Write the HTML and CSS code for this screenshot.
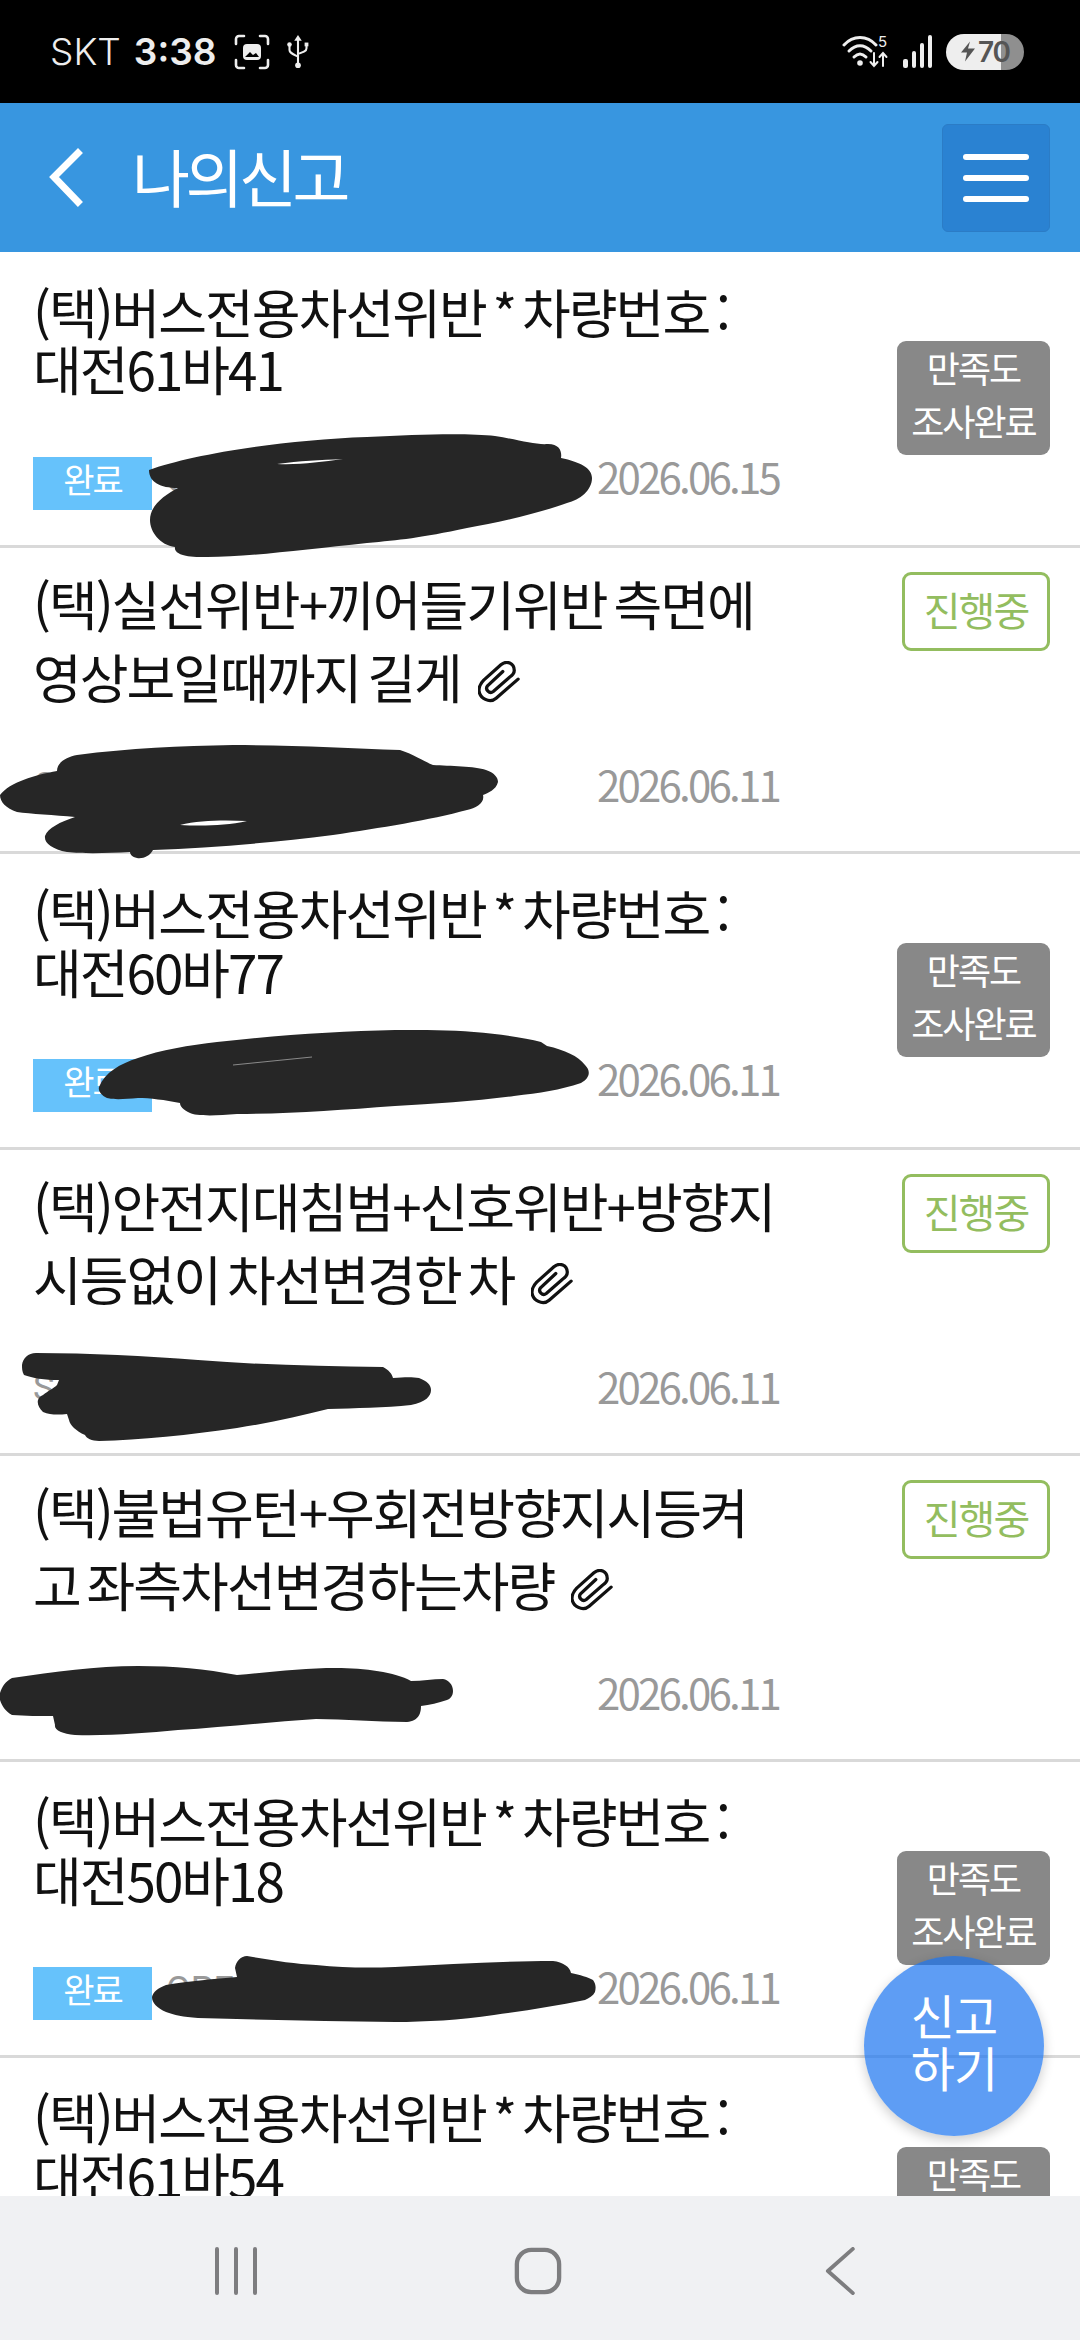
FILE: index.html
```html
<!DOCTYPE html>
<html lang="ko">
<head>
    <meta charset="UTF-8">
    <title>나의신고</title>
    <link rel="stylesheet" href="styles.css">
</head>
<body>
    <!-- Status bar -->
    <div class="status-bar">
        <span class="carrier">SKT</span>
        <span class="clock">3:38</span>
        <svg class="capture-icon" viewBox="0 0 36 36" fill="none" stroke="#eee" stroke-width="2.6" stroke-linecap="round">
            <path d="M2 10V5a3 3 0 0 1 3-3h5M26 2h5a3 3 0 0 1 3 3v5M34 26v5a3 3 0 0 1-3 3h-5M10 34H5a3 3 0 0 1-3-3v-5"/>
            <rect x="9" y="10" width="18" height="16" rx="4" fill="#eee" stroke="none"/>
            <path d="M11 23l5-5 3 3 3-2 3 4z" fill="#000" stroke="none"/>
        </svg>
        <svg class="usb-icon" viewBox="0 0 24 36" fill="none" stroke="#eee" stroke-width="2.2">
            <path d="M12 3v28M3 11v5c0 3 3 4 9 7M21 11v3c0 3-3 4-9 6"/>
            <path d="M12 0l4 6H8z" fill="#eee" stroke="none"/>
            <circle cx="12" cy="32" r="3" fill="#eee" stroke="none"/>
            <circle cx="3" cy="10" r="2.4" fill="#eee" stroke="none"/>
            <rect x="19" y="8" width="4" height="4" fill="#eee" stroke="none"/>
        </svg>
        <span class="status-spacer"></span>
        <svg class="wifi-icon" viewBox="0 0 48 36" fill="none" stroke="#eee" stroke-linecap="round">
            <path d="M2 11C11 1 25 1 34 11" stroke-width="3"/>
            <path d="M7 17c7-7 15-7 22 0" stroke-width="3"/>
            <path d="M12 23c4-4 8-4 12 0" stroke-width="3"/>
            <circle cx="18" cy="29" r="2.8" fill="#eee" stroke="none"/>
            <path d="M32 19v13m-3.500-4l3.500 4 3.500-4M41 32V19m-3.500 4l3.500-4 3.500 4" stroke-width="2"/>
            <text x="36" y="13" class="wifi-five">5</text>
        </svg>
        <svg class="signal-icon" viewBox="0 0 32 36" fill="#eee">
            <rect x="1" y="25" width="5" height="9" rx="2"/>
            <rect x="10" y="17" width="4" height="17" rx="2"/>
            <rect x="18" y="9" width="4" height="25" rx="2"/>
            <rect x="26" y="1" width="4" height="33" rx="2"/>
        </svg>
        <div class="battery">
            <svg class="bolt" viewBox="0 0 16 20"><path d="M10 0L1 11h6l-2 9 10-13H8z" fill="#555"/></svg>
            <span>70</span>
        </div>
    </div>

    <!-- Header -->
    <header>
        <svg class="back-icon" viewBox="0 0 36 60" fill="none" stroke="#fff" stroke-width="7" stroke-linecap="square">
            <path d="M30 5L6 29l24 25"/>
        </svg>
        <h1>나의신고</h1>
        <button class="menu-button">
            <span></span><span></span><span></span>
        </button>
    </header>

    <!-- Report list -->
    <main class="report-list">
        <article class="report-item">
            <div class="report-body">
                <h2>(택)버스전용차선위반 * 차량번호 :<br>대전61바41</h2>
                <div class="report-meta">
                    <span class="tag-done">완료</span>
                    <span class="owner">G</span>
                    <span class="report-date">2026.06.15</span>
                </div>
            </div>
            <div class="state-box state-done">만족도<br>조사완료</div>
            <svg class="scribble" viewBox="0 252 1080 296">
                <path d="M149 470C190 455 280 440 367 437C420 434 470 433 495 436C520 440 535 445 548 444C560 444 562 452 561 458C580 462 592 468 592 478C592 490 580 500 567 503C540 513 500 522 467 528C420 538 400 540 367 543C300 550 240 558 200 557C180 557 174 552 175 547C160 545 150 532 150 520C150 505 165 495 178 488C160 488 149 482 149 470Z"/>
                <path class="slit" d="M277 464C300 461 320 460 343 459C320 462 300 465 277 464Z"/>
            </svg>
        </article>

        <article class="report-item has-file">
            <div class="report-body">
                <h2>(택)실선위반+끼어들기위반 측면에<br>영상보일때까지 길게
                    <svg class="clip-icon" viewBox="0 0 44 44" fill="none" stroke="#111" stroke-width="3.400" stroke-linecap="round"><path d="M42 19L19 39C12 45 2 39 1 31C1 27 3 23 6 20L24 4C30-1 38 2 38 10C38 13 36 15 33 17L16 32C12 35 7 30 10 26L26 11"/></svg>
                </h2>
                <div class="report-meta">
                    <span class="owner">G</span>
                    <span class="report-date">2026.06.11</span>
                </div>
            </div>
            <div class="state-box state-going">진행중</div>
            <svg class="scribble" viewBox="0 548 1080 306">
                <path d="M0 795C10 782 35 775 57 771C57 762 67 757 77 755C130 748 180 746 233 745C290 745 350 748 400 750C415 755 425 762 433 765C450 766 475 766 486 770C495 773 498 778 498 782C496 790 488 793 483 795C485 803 476 808 467 810C430 820 380 828 333 835C270 843 210 848 153 850C150 856 143 859 137 858C132 857 130 854 130 852C110 853 85 854 67 852C52 849 44 843 45 836C48 828 60 822 75 817C55 815 30 814 17 812C6 808 0 802 0 795Z"/>
                <path class="slit" d="M180 825C200 820 225 820 247 821C225 826 200 826 180 825Z"/>
            </svg>
        </article>

        <article class="report-item">
            <div class="report-body">
                <h2>(택)버스전용차선위반 * 차량번호 :<br>대전60바77</h2>
                <div class="report-meta">
                    <span class="tag-done">완료</span>
                    <span class="report-date">2026.06.11</span>
                </div>
            </div>
            <div class="state-box state-done">만족도<br>조사완료</div>
            <svg class="scribble" viewBox="0 854 1080 296">
                <path d="M99 1087C105 1072 120 1064 138 1058C160 1050 190 1045 217 1042C280 1035 340 1031 395 1030C425 1030 450 1030 474 1032C500 1034 525 1038 541 1042L547 1046C565 1050 578 1056 585 1065C591 1071 590 1078 581 1083C560 1090 540 1093 514 1096C475 1101 435 1104 395 1106C340 1110 290 1114 237 1114C215 1116 195 1116 190 1113C183 1110 180 1106 180 1103C165 1100 150 1098 138 1098C125 1099 115 1100 107 1098C101 1095 98 1091 99 1087Z"/>
                <path class="slit-gray" d="M233 1065L312 1057"/>
            </svg>
        </article>

        <article class="report-item has-file">
            <div class="report-body">
                <h2>(택)안전지대침범+신호위반+방향지<br>시등없이 차선변경한 차
                    <svg class="clip-icon" viewBox="0 0 44 44" fill="none" stroke="#111" stroke-width="3.400" stroke-linecap="round"><path d="M42 19L19 39C12 45 2 39 1 31C1 27 3 23 6 20L24 4C30-1 38 2 38 10C38 13 36 15 33 17L16 32C12 35 7 30 10 26L26 11"/></svg>
                </h2>
                <div class="report-meta">
                    <span class="owner">S</span>
                    <span class="report-date">2026.06.11</span>
                </div>
            </div>
            <div class="state-box state-going">진행중</div>
            <svg class="scribble" viewBox="0 1150 1080 306">
                <path d="M22 1365C23 1358 28 1353 36 1353C90 1353 145 1356 198 1360C260 1365 320 1366 383 1367C389 1370 392 1374 393 1378C405 1377 413 1377 419 1378C427 1381 431 1385 431 1390C431 1396 426 1402 411 1405C385 1408 355 1408 328 1409C300 1416 270 1423 237 1428C190 1435 140 1440 99 1441C92 1441 86 1438 85 1435C76 1431 70 1425 69 1420L67 1414C58 1415 50 1415 43 1412C39 1408 37 1404 38 1400C39 1397 41 1396 43 1395C48 1391 54 1388 57 1385L59 1380C45 1380 32 1378 24 1375C22 1372 22 1368 22 1365Z"/>
            </svg>
        </article>

        <article class="report-item has-file">
            <div class="report-body">
                <h2>(택)불법유턴+우회전방향지시등켜<br>고 좌측차선변경하는차량
                    <svg class="clip-icon" viewBox="0 0 44 44" fill="none" stroke="#111" stroke-width="3.400" stroke-linecap="round"><path d="M42 19L19 39C12 45 2 39 1 31C1 27 3 23 6 20L24 4C30-1 38 2 38 10C38 13 36 15 33 17L16 32C12 35 7 30 10 26L26 11"/></svg>
                </h2>
                <div class="report-meta">
                    <span class="report-date">2026.06.11</span>
                </div>
            </div>
            <div class="state-box state-going">진행중</div>
            <svg class="scribble" viewBox="0 1456 1080 306">
                <path d="M0 1693C2 1686 6 1681 12 1678C55 1672 95 1666 138 1666C175 1666 205 1669 237 1675C270 1672 305 1668 336 1668C365 1668 395 1672 411 1681C422 1681 433 1679 443 1679C449 1680 453 1685 453 1691C453 1696 450 1699 447 1700C438 1703 430 1705 421 1706C421 1713 419 1721 407 1722C375 1722 345 1719 316 1719C270 1722 225 1727 178 1730C145 1733 110 1736 75 1735C62 1734 54 1730 55 1725L53 1716C40 1716 25 1716 12 1715C5 1711 2 1706 0 1700Z"/>
            </svg>
        </article>

        <article class="report-item">
            <div class="report-body">
                <h2>(택)버스전용차선위반 * 차량번호 :<br>대전50바18</h2>
                <div class="report-meta">
                    <span class="tag-done">완료</span>
                    <span class="owner">OPE</span>
                    <span class="report-date">2026.06.11</span>
                </div>
            </div>
            <div class="state-box state-done">만족도<br>조사완료</div>
            <svg class="scribble" viewBox="0 1762 1080 296">
                <path d="M152 1997C153 1992 158 1988 166 1985C190 1981 215 1979 237 1977L235 1968C236 1961 241 1956 247 1956C270 1960 295 1964 316 1965C345 1968 370 1968 395 1967C450 1964 505 1961 553 1961C563 1962 570 1967 571 1973C580 1975 588 1977 593 1980C596 1984 596 1988 595 1992C593 1996 589 1998 585 2000C555 2006 525 2011 494 2015C460 2020 425 2022 395 2022C330 2021 265 2020 198 2018C183 2017 174 2015 166 2012C157 2008 152 2003 152 1997Z"/>
            </svg>
        </article>

        <article class="report-item">
            <div class="report-body">
                <h2>(택)버스전용차선위반 * 차량번호 :<br>대전61바54</h2>
            </div>
            <div class="state-box state-done">만족도<br>조사완료</div>
        </article>
    </main>

    <!-- Floating report button -->
    <button class="report-fab">신고<br>하기</button>

    <!-- Navigation bar -->
    <nav class="nav-bar">
        <svg class="nav-icon" viewBox="0 0 44 48" fill="none" stroke="#7d7d7f" stroke-width="4" stroke-linecap="round"><path d="M3 2v44M22 2v44M41 2v44"/></svg>
        <svg class="nav-icon" viewBox="0 0 50 50" fill="none" stroke="#7d7d7f" stroke-width="4.500"><rect x="3" y="3" width="44" height="44" rx="15"/></svg>
        <svg class="nav-icon" viewBox="0 0 32 50" fill="none" stroke="#7d7d7f" stroke-width="4" stroke-linecap="round" stroke-linejoin="round"><path d="M29 2L3 25l26 23"/></svg>
    </nav>
</body>
</html>
```

FILE: styles.css
```css
body {
    font-family: "Noto Sans CJK KR", Roboto, sans-serif;
    margin: 0;
    padding: 0;
    width: 1080px;
    height: 2340px;
    overflow: hidden;
    position: relative;
    display: flex;
    flex-direction: column;
    background-color: white;
}

.status-bar {
    height: 103px;
    background-color: black;
    color: #eee;
    display: flex;
    align-items: center;
    padding: 0 56px 0 50px;
    box-sizing: border-box;
    flex-shrink: 0;
}

.carrier {
    font-family: Inter, sans-serif;
    font-size: 37px;
    font-weight: 300;
    margin-right: 13px;
}

.clock {
    font-family: Inter, sans-serif;
    font-size: 37px;
    font-weight: 600;
    margin-right: 18px;
}

.capture-icon {
    width: 36px;
    height: 36px;
    margin-right: 16px;
}

.usb-icon {
    width: 24px;
    height: 34px;
}

.status-spacer {
    flex-grow: 1;
}

.wifi-icon {
    width: 48px;
    height: 36px;
    margin-right: 12px;
}

.wifi-five {
    font-family: Inter, sans-serif;
    font-size: 15px;
    fill: #eee;
    stroke: none;
}

.signal-icon {
    width: 32px;
    height: 36px;
    margin-right: 12px;
}

.battery {
    width: 78px;
    height: 36px;
    border-radius: 18px;
    background: linear-gradient(to right, #eee 71%, #8f8f8f 71%);
    color: #555;
    font-family: Inter, sans-serif;
    font-size: 28px;
    font-weight: 600;
    letter-spacing: -1px;
    display: flex;
    align-items: center;
    justify-content: center;
    gap: 2px;
}

.bolt {
    width: 16px;
    height: 21px;
}

header {
    height: 149px;
    background-color: #3896e0;
    display: flex;
    align-items: center;
    padding: 0 30px 0 48px;
    box-sizing: border-box;
    flex-shrink: 0;
}

.back-icon {
    width: 36px;
    height: 60px;
    margin-right: 48px;
}

header h1 {
    margin: 0 0 6px;
    flex-grow: 1;
    color: white;
    font-size: 63px;
    font-weight: 400;
    letter-spacing: -4.500px;
}

.menu-button {
    width: 108px;
    height: 108px;
    background-color: #2a82d2;
    border: 1px solid #2b7cc6;
    border-radius: 6px;
    display: flex;
    flex-direction: column;
    align-items: center;
    justify-content: center;
    gap: 15px;
    padding: 0;
}

.menu-button span {
    width: 66px;
    height: 6px;
    border-radius: 3px;
    background-color: white;
}

.report-list {
    flex-grow: 1;
    min-height: 0;
    overflow: hidden;
}

.report-item {
    position: relative;
    display: flex;
    align-items: flex-start;
    padding: 24px 30px 0 33px;
    height: 296px;
    box-sizing: border-box;
    border-bottom: 3px solid #d9d9d9;
}

.report-item.has-file {
    height: 306px;
}

.report-body {
    width: 746px;
    flex-shrink: 0;
    margin-right: 118px;
}

.report-body h2 {
    margin: 0;
    padding-top: 5px;
    font-size: 53px;
    font-weight: 400;
    line-height: 59px;
    letter-spacing: -2px;
    word-spacing: -6px;
    white-space: nowrap;
    color: #111;
    height: 132px;
    box-sizing: border-box;
}

.report-item:first-child h2 {
    padding-top: 7px;
    line-height: 57px;
}

.has-file .report-body h2 {
    padding-top: 0;
    line-height: 73px;
    height: 141px;
    margin-top: -5px;
}

.clip-icon {
    width: 42px;
    height: 42px;
    margin-left: 10px;
    vertical-align: -4px;
}

.report-meta {
    display: flex;
    align-items: center;
    height: 53px;
    margin-top: 49px;
}

.has-file .report-meta {
    margin-top: 55px;
}

.tag-done {
    width: 119px;
    height: 53px;
    line-height: 44px;
    background-color: #66c2fb;
    color: white;
    font-size: 34px;
    letter-spacing: -2px;
    text-align: center;
    flex-shrink: 0;
    margin-right: 14px;
}

.owner {
    color: #999;
    font-family: Roboto, sans-serif;
    font-size: 36px;
    margin-bottom: 8px;
}

.report-date {
    margin-left: auto;
    margin-bottom: 16px;
    color: #999;
    font-size: 42px;
    letter-spacing: -2.800px;
}

.has-file .report-date {
    margin-bottom: 12px;
}

.state-box {
    width: 153px;
    box-sizing: border-box;
    flex-shrink: 0;
    text-align: center;
    font-size: 36px;
    letter-spacing: -2px;
    border-radius: 9px;
    margin-top: 65px;
    line-height: 53px;
    padding: 0;
    height: 114px;
    background-color: #888;
    color: white;
}

.state-box.state-going {
    width: 148px;
    height: 79px;
    margin: 0 0 0 5px;
    font-size: 40px;
    line-height: 68px;
    padding: 0;
    background-color: white;
    border: 3px solid #93bd5f;
    color: #93bd5f;
}

.scribble {
    position: absolute;
    left: 0;
    top: 0;
    width: 1080px;
    overflow: visible;
    fill: #262626;
    stroke: none;
}

.scribble .slit {
    fill: white;
}

.scribble .slit-gray {
    fill: none;
    stroke: #8a8a8a;
    stroke-width: 1;
}

.report-fab {
    position: absolute;
    left: 864px;
    top: 1956px;
    width: 180px;
    height: 180px;
    border: none;
    border-radius: 50%;
    padding: 0 0 12px;
    background-color: rgba(26, 116, 240, 0.7);
    box-shadow: 0 4px 12px rgba(0, 0, 0, 0.2);
    color: white;
    font-family: "Noto Sans CJK KR", sans-serif;
    font-size: 48px;
    line-height: 52px;
    letter-spacing: -1px;
}

.nav-bar {
    height: 144px;
    background-color: #f0f1f3;
    flex-shrink: 0;
    display: grid;
    grid-template-columns: 236px 368px 236px;
    justify-items: center;
    align-items: center;
    padding: 6px 0 0 118px;
    box-sizing: border-box;
}

.nav-icon {
    height: 48px;
    width: auto;
}
```
